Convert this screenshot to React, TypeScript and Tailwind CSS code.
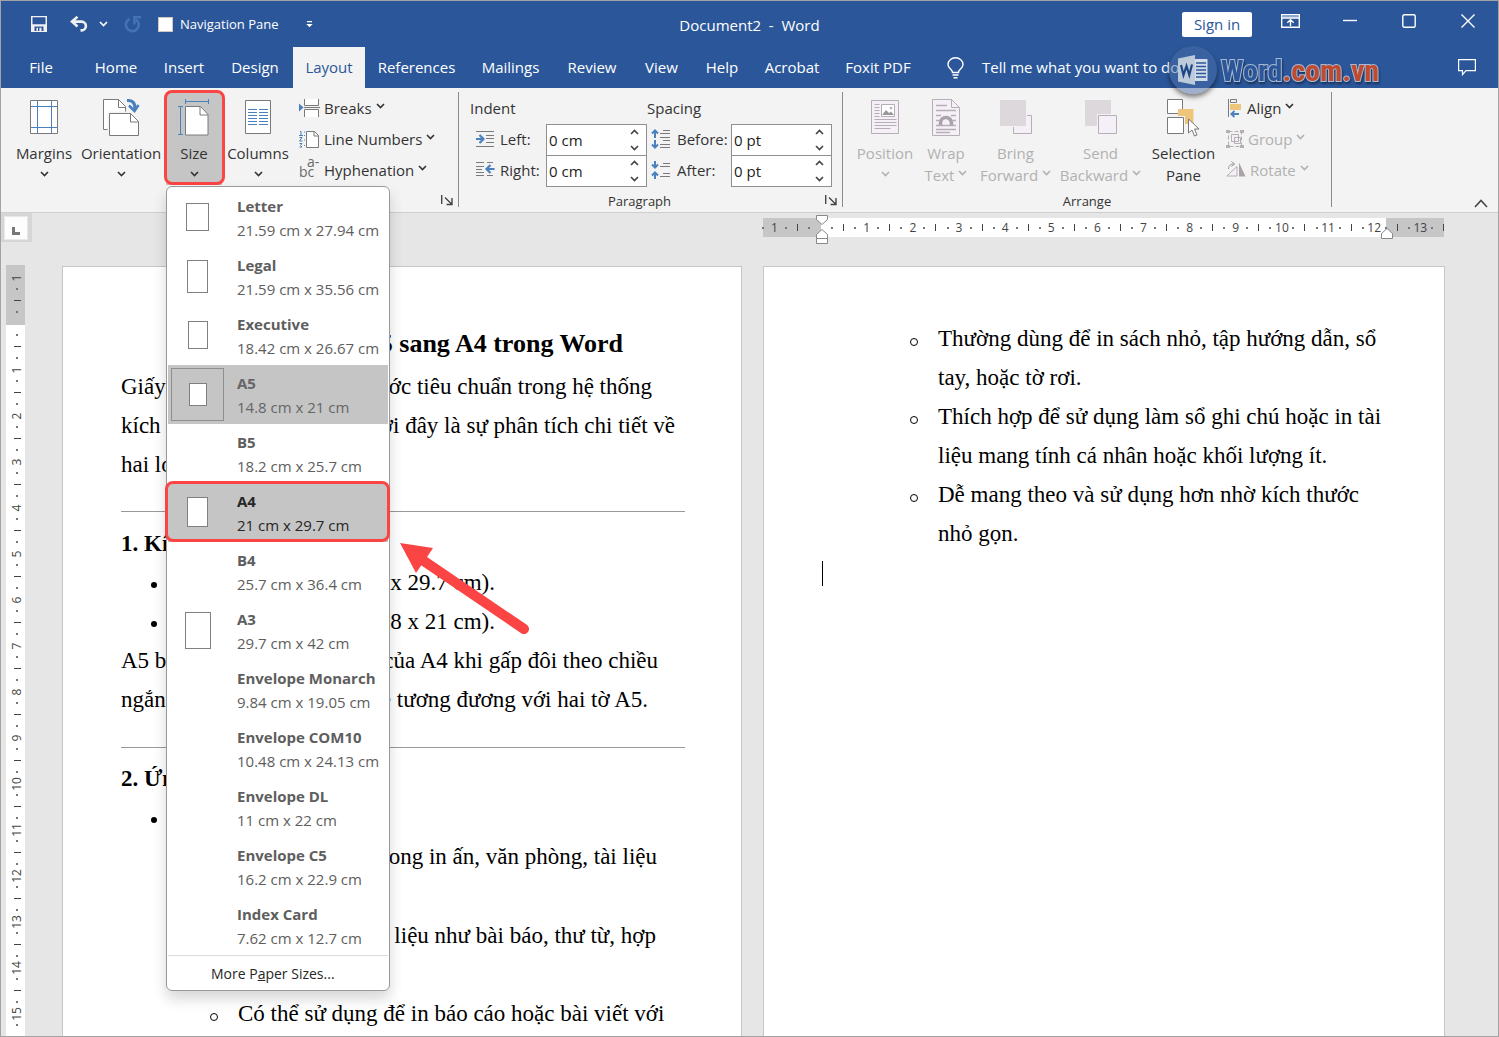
import React from 'react';

type P = { children?: React.ReactNode };

const Chevron = ({ className = '' }: { className?: string }) => (
  <svg width="9" height="6" viewBox="0 0 9 6" className={'shrink-0 ' + className} fill="none" stroke="currentColor" strokeWidth="1.6">
    <path d="M1 1l3.5 3.5L8 1" />
  </svg>
);

/* ---------- title bar ---------- */

const SaveIcon = () => (
  <svg width="16" height="16" viewBox="0 0 16 16">
    <path d="M0 0h16v16H0z" fill="#f0f0f0" />
    <path d="M1.5 1.2h13v7h-13zM3.5 10.5h9V15h-2v-3.2H8.4V15H7v-3.2H5.5V15h-2z" fill="#2b579a" />
  </svg>
);

const UndoIcon = () => (
  <svg width="18" height="16" viewBox="0 0 18 16" fill="none" stroke="#f0f0f0" strokeWidth="2.6">
    <path d="M7.5 .8L2 5.6l5.5 4.8M2.5 5.6h9a4.4 4.4 0 010 8.8h-1" />
  </svg>
);

const RedoIcon = () => (
  <svg width="18" height="17" viewBox="0 0 18 17" fill="none" stroke="#4473b3" strokeWidth="2.6">
    <path d="M5.500 3A6.400 6.400 0 1012 3.500" />
    <path d="M10.500 8.500V1.300h6.500" strokeWidth="2.400" />
  </svg>
);

function TitleBar() {
  return (
    <header className="flex h-[46px] items-center text-white">
      <div className="flex flex-1 items-center pl-[30px]">
        <button aria-label="Save"><SaveIcon /></button>
        <button aria-label="Undo" className="ml-[23px]"><UndoIcon /></button>
        <button aria-label="Undo history" className="ml-[11px]"><Chevron /></button>
        <button aria-label="Redo" className="ml-4"><RedoIcon /></button>
        <label className="ml-4 flex items-center gap-[7px] pt-px text-[13px]">
          <input type="checkbox" className="size-[15px] appearance-none border border-[#d0c8c0] bg-white" />
          Navigation Pane
        </label>
        <button aria-label="Customize Quick Access Toolbar" className="ml-[28px]">
          <svg width="7" height="7" viewBox="0 0 7 7" fill="#fff"><path d="M1 0h5v1.2H1zM.3 3h6.4L3.5 6.2z" /></svg>
        </button>
      </div>
      <h1 className="pt-[2px] text-[15px] whitespace-pre">Document2  -  Word</h1>
      <div className="flex flex-1 items-center justify-end pr-[23px] pl-[7px]">
        <button className="h-[25px] w-[70px] rounded-xs bg-white text-[15px] leading-[25px] text-[#2b579a]">Sign in</button>
        <button aria-label="Ribbon Display Options" className="mb-1.5 ml-[29px]">
          <svg width="19" height="14" viewBox="0 0 19 14" fill="none" stroke="#fff" strokeWidth="1.4">
            <path d="M.7.7h17.6v12.6H.7z" /><path d="M1 2.6h17" stroke="#8fa8cf" strokeWidth="2" /><path d="M1 4h17M9.5 12V6M6.3 8.8l3.2-3 3.2 3" />
          </svg>
        </button>
        <button aria-label="Minimize" className="mb-1.5 ml-[43px]">
          <svg width="14" height="14" viewBox="0 0 14 14" stroke="#fff" strokeWidth="1.4"><path d="M0 6.5h14" /></svg>
        </button>
        <button aria-label="Maximize" className="mb-1.5 ml-[45px]">
          <svg width="14" height="14" viewBox="0 0 14 14" fill="none" stroke="#fff" strokeWidth="1.4"><rect x=".8" y=".8" width="12.4" height="12.4" rx="1.5" /></svg>
        </button>
        <button aria-label="Close" className="mb-1.5 ml-[45px]">
          <svg width="14" height="14" viewBox="0 0 14 14" stroke="#fff" strokeWidth="1.4"><path d="M.5.5l13 13M13.5.5l-13 13" /></svg>
        </button>
      </div>
    </header>
  );
}

/* ---------- tabs ---------- */

const TABS: [string, string][] = [
  ['File', 'w-[80px]'], ['Home', 'w-[70px]'], ['Insert', 'w-[66px]'], ['Design', 'w-[76px]'],
  ['Layout', 'w-[72px]'], ['References', 'w-[103px]'], ['Mailings', 'w-[85px]'], ['Review', 'w-[78px]'],
  ['View', 'w-[61px]'], ['Help', 'w-[60px]'], ['Acrobat', 'w-[80px]'], ['Foxit PDF', 'w-[92px]'],
];

function Watermark() {
  return (
    <div className="absolute -top-[1px] left-[1168px] z-10 flex items-center" aria-label="Word.com.vn">
      <span className="flex size-[48px] items-center justify-center rounded-full bg-[#4a6ea6]/50 shadow-[0_3px_5px_rgba(0,0,0,0.5)]">
        <svg width="32" height="30" viewBox="0 0 32 30">
          <path d="M17 4h13.500v22H17z" fill="#d3dbe8" />
          <path d="M19 8h10M19 11.500h10M19 15h10M19 18.500h10M19 22h10" stroke="#2b579a" strokeWidth="1.5" />
          <path d="M1 3.500L18 0v30L1 26.500z" fill="#bccada" />
          <path d="M4 10l2.500 10L9.500 11l2.800 9L15 9.500" fill="none" stroke="#1f4687" strokeWidth="2.200" />
        </svg>
      </span>
      <span className="ml-[4px] font-['Liberation_Sans_Narrow','Roboto_Condensed','Liberation_Sans',sans-serif] text-[30px] font-bold text-[#2b579a] [paint-order:stroke_fill] [-webkit-text-stroke:2px_#a9b9d2] drop-shadow-[1px_2px_1px_rgba(0,0,0,0.4)]">
        Word<span className="text-[#c04a30]">.com.vn</span>
      </span>
    </div>
  );
}

function TabBar() {
  return (
    <nav className="relative flex h-[41px] items-stretch text-[15px] text-white">
      {TABS.map(([t, w]) => (
        <button key={t} className={w + (t === 'Layout' ? ' bg-[#f3f3f3] text-[#2b579a]' : '')}>{t}</button>
      ))}
      <button className="ml-[23px] flex items-center gap-[18px] whitespace-nowrap">
        <svg width="17" height="22" viewBox="0 0 17 22" fill="none" stroke="#fff" strokeWidth="1.4">
          <path d="M5.500 15.500c0-3-4.500-4-4.500-8a7.500 6.700 0 0115 0c0 4-4.500 5-4.500 8zM5.500 18h6M6.500 20.700h4" />
        </svg>
        Tell me what you want to do
      </button>
      <Watermark />
      <button aria-label="Comments" className="mr-[22px] ml-auto">
        <svg width="18" height="17" viewBox="0 0 18 17" fill="none" stroke="#fff" strokeWidth="1.2"><path d="M.6.600h16.800v11H8l-3.500 4v-4H.600z" /></svg>
      </button>
    </nav>
  );
}

/* ---------- ribbon icons ---------- */

const Ico = ({ w, h, children }: P & { w: number; h: number }) => (
  <svg width={w} height={h} viewBox={`0 0 ${w} ${h}`} fill="none" strokeWidth="1" className="shrink-0">{children}</svg>
);
const G = '#7a7a7a';
const B = '#4a80bd';
const D = '#b5aeb5';

const MarginsIcon = () => (
  <Ico w={28} h={36}>
    <path d="M.5 1.500h27v33H.500z" fill="#fff" stroke={G} />
    <path d="M7.500 2v32M21.500 2v32M1 7.500h26M1 28.500h26" stroke={B} />
  </Ico>
);
const OrientationIcon = () => (
  <Ico w={38} h={40}>
    <path d="M1.500.500h15l7 7v23h-22z" fill="#fff" stroke={G} /><path d="M16.500.500v8h7" stroke={G} />
    <path d="M7.500 14.500h22l8 8v15h-30z" fill="#fff" stroke="#f3f3f3" strokeWidth="4" />
    <path d="M7.500 14.500h21l8 8v14h-29z" fill="#fff" stroke={G} /><path d="M28.500 14.500V23h8" stroke={G} />
    <path d="M25 1.500c6 0 8 2 8 9" stroke={B} strokeWidth="3.200" /><path d="M27 6.500l5.500 5.500L36.500 6" stroke={B} strokeWidth="2.600" />
  </Ico>
);
const SizeIcon = () => (
  <Ico w={32} h={38}>
    <path d="M7.500 7.500h15l7.500 8v20.500H7.500z" fill="#fff" stroke={G} /><path d="M22 7.500v8.500h8" stroke={G} />
    <path d="M7.500 0v5M30.500 0v5M7.500 2.500h23M0 7.500h5M0 35.500h5M2.500 8v27.500" stroke={B} />
  </Ico>
);
const ColumnsIcon = () => (
  <Ico w={26} h={36}>
    <path d="M.5 1.500h25v33H.500z" fill="#fff" stroke={G} />
    <path d="M3 10.500h9M14 10.500h9M3 13.500h9M14 13.500h9M3 16.500h9M14 16.500h9M3 19.500h9M14 19.500h9M3 22.500h9M14 22.500h9M3 25.500h9M14 25.500h9" stroke={B} />
  </Ico>
);
const BreaksIcon = () => (
  <Ico w={21} h={20}>
    <path d="M5.500 1v6.500h14V1M5.500 19v-7.500h14V19" fill="#fff" stroke={G} /><path d="M5 9.500h16" stroke={G} />
    <path d="M0 5.500v8L4.500 9.500z" fill={B} />
  </Ico>
);
const LineNumbersIcon = () => (
  <Ico w={21} h={20}>
    <path d="M7.500 2.500h8l4 4v12h-12z" fill="#fff" stroke={G} /><path d="M15 2.500V7h4.500" stroke={G} />
    <path d="M1 2.500h1v4M0 6.500h4M.5 8.500h2.500l-2.500 3.500h3M.5 14.500h2.500l-1.500 2 1.500 1.500H.500M5 3h1M5 6.500h1M5 11h1M5 16.500h1" stroke={B} />
  </Ico>
);
const HyphenationIcon = () => (
  <span className="mb-[6px] grid w-[21px] shrink-0 text-left text-[14px] leading-[10px] text-[#6a6a6a]" aria-hidden="true">
    <span className="pl-[8px]">a-</span><span>bc</span>
  </span>
);
const IndentIcon = ({ right = false }: { right?: boolean }) => (
  <Ico w={20} h={18}>
    {right
      ? <><path d="M1 1.500h8M12 1.500h6M1 5.500h8M1 8.500h6M1 11.500h8M1 14.500h8M12 14.500h6" stroke={G} /><path d="M11.500 8h8M15.500 4L11.500 8l4 4" stroke={B} strokeWidth="2.200" /></>
      : <><path d="M1 1.500h18M11 5.500h8M11 8.500h8M11 12.500h8M1 16.500h18" stroke={G} /><path d="M1 9h7M4.500 5l4 4-4 4" stroke={B} strokeWidth="2.200" /></>}
  </Ico>
);
const SpacingIcon = ({ after = false }: { after?: boolean }) => (
  <Ico w={20} h={20}>
    {after
      ? <><path d="M12 3.500h7M9 6.500h10M12 13.500h7M9 16.500h10" stroke={G} /><path d="M4 1v6M1 4.500l3 3 3-3M4 19v-6M1 15.500l3-3 3 3" stroke={B} strokeWidth="2" /></>
      : <><path d="M12 1.500h7M9 4.500h10M9 8.500h10M12 11.500h7M9 15.500h10M9 18.500h10" stroke={G} /><path d="M4 9V2M1 4.500l3-3 3 3M4 11v7M1 15.500l3 3 3-3" stroke={B} strokeWidth="2" /></>}
  </Ico>
);
const PositionIcon = () => (
  <Ico w={30} h={36}>
    <path d="M1.500 1.500h27v33h-27z" fill="#f5f0f7" stroke={D} />
    <path d="M4.500 5.500h5M4.500 8.500h5M4.500 11.500h5M4.500 14.500h5M4.500 17.500h5M4.500 20.500h22M4.500 23.500h22M4.500 26.500h22M4.500 29.500h16" stroke={D} />
    <path d="M11.500 5.500h13v12h-13z" fill="#fff" stroke={D} /><path d="M12 16l4-5 3 3 2-1.500 3 3.500z" fill="#999" /><circle cx="21" cy="9" r="1.300" fill={D} />
  </Ico>
);
const WrapIcon = () => (
  <Ico w={28} h={38}>
    <path d="M.5.500h19l8 8v28H.500z" fill="#f5f0f7" stroke={D} /><path d="M19.500.500v8h8" stroke={D} />
    <path d="M4 6.500h11M4 11.500h20M4 16.500h5M19 16.500h5M4 21.500h3M21 21.500h3M4 26.500h20M4 30.500h20M4 33.500h14" stroke={D} strokeWidth="1.300" />
    <path d="M8.500 26v-2a5.500 5.500 0 0111 0v2" stroke="#aaa4aa" strokeWidth="3.600" />
  </Ico>
);
const ForwardIcon = () => (
  <Ico w={34} h={36}><path d="M14.500 16.500h18v18h-18z" fill="#f5f0f7" stroke={D} /><path d="M0 0h28v28H0z" fill="#f3f3f3" /><path d="M1 1h26v26H1z" fill="#ddd8dc" /></Ico>
);
const BackwardIcon = () => (
  <Ico w={34} h={36}><path d="M1 1h26v26H1z" fill="#ddd8dc" /><path d="M13 15h21v21H13z" fill="#f3f3f3" /><path d="M14.500 16.500h18v18h-18z" fill="#f5f0f7" stroke={D} /></Ico>
);
const SelectionIcon = () => (
  <Ico w={36} h={38}>
    <path d="M1.500.500h15v14h-15z" fill="#fff" stroke={G} /><path d="M12 10h15.500v15H12z" fill="#eec67b" />
    <path d="M1.500 18.500h16v16h-16z" fill="#fff" stroke="#f3f3f3" strokeWidth="3" />
    <path d="M1.500 18.500h16v16h-16z" fill="#fff" stroke={G} />
    <path d="M22.500 20v14l3.500-3 2.500 6 2.500-1-2.500-6h4.500z" fill="#fff" stroke="#777" />
  </Ico>
);
const AlignIcon = () => (
  <Ico w={17} h={20}>
    <path d="M2.500 1v18" stroke={G} /><path d="M4.500 1.500h6v3h-6z" stroke={G} /><path d="M4 6h11v6H4z" fill="#eec67b" />
    <path d="M5 16h8M8.500 13L5.300 16l3.200 3" stroke={B} strokeWidth="1.800" />
  </Ico>
);
const GroupIcon = () => (
  <Ico w={18} h={20}>
    <path d="M2.500 2.500h13v15h-13z" stroke={D} strokeDasharray="4 2" /><path d="M5.500 5.500h7v7h-7zM8.500 8.500h6v6h-6z" fill="#f5f0f7" fillOpacity=".5" stroke={D} />
    <path d="M0 1h4v3H0zM14 1h4v3h-4zM0 16h4v3H0zM14 16h4v3h-4z" fill={D} />
  </Ico>
);
const RotateIcon = () => (
  <Ico w={20} h={18}>
    <path d="M11 5.500v9.500H.800z" fill="#f5f0f7" stroke={D} /><path d="M13 1.500V15.500h6.500z" fill="#aaa4aa" /><path d="M2.500 8c0-3.500 2-5 6-5M5.500.500l3 2.500-3 2.500" stroke="#999" />
  </Ico>
);

/* ---------- ribbon parts ---------- */

function BigButton({ icon, lines, width, disabled, arrow = true }: { icon: React.ReactNode; lines: string[]; width: string; disabled?: boolean; arrow?: boolean }) {
  return (
    <button disabled={disabled} className={'flex h-[93px] flex-col items-center whitespace-nowrap leading-[22px] ' + width + (disabled ? ' text-[#b1b1b1]' : '')}>
      <span className="flex h-[50px] items-start pt-[7px]">{icon}</span>
      <span>{lines[0]}</span>
      <span className="flex h-[21px] items-center gap-[4px]">{lines[1]}{arrow && <Chevron className={lines[1] ? 'mb-[3px]' : 'mb-[2px]'} />}</span>
    </button>
  );
}

function SmallButton({ icon, label, disabled }: { icon: React.ReactNode; label: string; disabled?: boolean }) {
  return (
    <button disabled={disabled} className={'flex h-[31px] items-center gap-[4px] whitespace-nowrap' + (disabled ? ' text-[#b1b1b1]' : '')}>
      {icon}<span className="pt-px">{label}</span><Chevron className="mb-[3px]" />
    </button>
  );
}

const Launcher = ({ label }: { label: string }) => (
  <button aria-label={label} className="absolute right-[5px] bottom-px">
    <svg width="12" height="11" viewBox="0 0 12 11" fill="none" stroke="#444" strokeWidth="1.400"><path d="M.7 0v9M4 2.500l6.500 6.500M11 3v6.500H5.500" /></svg>
  </button>
);

function Group({ title, label, className, footer = '', children }: P & { title: string; label?: string; className: string; footer?: string }) {
  return (
    <section aria-label={title} className={'relative flex h-[115px] flex-col border-r border-[#8a8a8a] ' + className}>
      <div className="flex h-[99px]">{children}</div>
      <div className={'text-center text-[13px] leading-[32px] ' + footer}>{label}</div>
    </section>
  );
}

function Field({ id, icon, label, value, iconBox, labelBox }: { id: string; icon: React.ReactNode; label: string; value: string; iconBox: string; labelBox: string }) {
  return (
    <div className="flex h-[31px] items-center">
      <span className={iconBox}>{icon}</span>
      <label htmlFor={id} className={labelBox}>{label}</label>
      <div className="mt-[2px] flex h-[32px] w-[101px] border border-[#8f8f8f] bg-white">
        <input id={id} defaultValue={value} className="w-[76px] min-w-0 bg-transparent px-[2px] pt-[2px] text-[#222] outline-none" />
        <span className="flex flex-1 flex-col items-center justify-between py-[4px] text-[#444]">
          <button aria-label={label + ' increase'} className="flex"><Chevron className="rotate-180" /></button>
          <button aria-label={label + ' decrease'} className="flex"><Chevron /></button>
        </span>
      </div>
    </div>
  );
}

/* ---------- size menu ---------- */

const SIZES: { name: string; dim: string; icon?: string }[] = [
  { name: 'Letter', dim: '21.59 cm x 27.94 cm', icon: 'w-[23px] h-[28px]' },
  { name: 'Legal', dim: '21.59 cm x 35.56 cm', icon: 'w-[21px] h-[33px]' },
  { name: 'Executive', dim: '18.42 cm x 26.67 cm', icon: 'w-[20px] h-[28px]' },
  { name: 'A5', dim: '14.8 cm x 21 cm', icon: 'w-[18px] h-[23px]' },
  { name: 'B5', dim: '18.2 cm x 25.7 cm' },
  { name: 'A4', dim: '21 cm x 29.7 cm', icon: 'w-[21px] h-[30px]' },
  { name: 'B4', dim: '25.7 cm x 36.4 cm' },
  { name: 'A3', dim: '29.7 cm x 42 cm', icon: 'w-[26px] h-[37px]' },
  { name: 'Envelope Monarch', dim: '9.84 cm x 19.05 cm' },
  { name: 'Envelope COM10', dim: '10.48 cm x 24.13 cm' },
  { name: 'Envelope DL', dim: '11 cm x 22 cm' },
  { name: 'Envelope C5', dim: '16.2 cm x 22.9 cm' },
  { name: 'Index Card', dim: '7.62 cm x 12.7 cm' },
];

function SizeMenu() {
  return (
    <div className="absolute top-full left-0 z-30 mt-px w-[224px] rounded-md border border-[#999] bg-white p-px text-[15px] shadow-[0_8px_14px_rgba(0,0,0,0.16)]">
      <ul>
        {SIZES.map((s) => (
          <li key={s.name} className="relative">
            <button className={'flex h-[59px] w-full items-center text-left leading-[24px] whitespace-nowrap ' + (s.name === 'A4' ? 'bg-[#c5c5c5] text-[#262626]' : s.name === 'A5' ? 'bg-[#c5c5c5] text-[#666]' : 'text-[#5e5e5e]')}>
              <span className={'mb-px ml-[3px] flex size-[53px] shrink-0 items-center justify-center border ' + (s.name === 'A5' ? 'border-[#8f8f8f]' : 'border-transparent')}>
                {s.icon && <span className={'border border-[#808080] bg-white ' + s.icon} />}
              </span>
              <span className="ml-[13px]">
                <span className="block font-bold">{s.name}</span>
                <span className="block">{s.dim}</span>
              </span>
            </button>
            {s.name === 'A4' && <span className="pointer-events-none absolute -top-[2px] right-[-2px] bottom-0 left-[-3px] rounded-lg border-[3px] border-[#fb4444]" />}
          </li>
        ))}
      </ul>
      <button className="block h-[34px] w-full border-t border-[#dcdcdc] pt-px pl-[43px] text-left text-[14px] text-[#262626]">
        More P<u>a</u>per Sizes...
      </button>
    </div>
  );
}

function Ribbon() {
  return (
    <div className="relative z-20 flex h-[125px] border-b border-[#cfcfcf] bg-[#f3f3f3] pt-[4px] text-[15px] text-[#333]">
      <Group title="Page Setup" className="w-[458px] pl-[11px]">
        <BigButton icon={<MarginsIcon />} lines={['Margins']} width="w-[64px]" />
        <BigButton icon={<OrientationIcon />} lines={['Orientation']} width="w-[90px]" />
        <div className="relative h-[93px] bg-[#c5c5c5]">
          <BigButton icon={<SizeIcon />} lines={['Size']} width="w-[56px]" />
          <span className="pointer-events-none absolute -top-[2px] right-[-3px] bottom-0 left-[-2px] rounded-lg border-[3px] border-[#fb4444]" />
          <SizeMenu />
        </div>
        <BigButton icon={<ColumnsIcon />} lines={['Columns']} width="w-[72px]" />
        <div className="ml-[5px]">
          <SmallButton icon={<BreaksIcon />} label="Breaks" />
          <SmallButton icon={<LineNumbersIcon />} label="Line Numbers" />
          <SmallButton icon={<HyphenationIcon />} label="Hyphenation" />
        </div>
        <Launcher label="Page Setup dialog" />
      </Group>
      <Group title="Paragraph" label="Paragraph" className="w-[384px]" footer="pr-[22px]">
        <div className="flex">
          <div className="pl-[11px]">
            <div className="h-[31px] leading-[33px]">Indent</div>
            <Field id="il" icon={<IndentIcon />} label="Left:" value="0 cm" iconBox="ml-[5px] w-[25px]" labelBox="w-[46px] pt-px" />
            <Field id="ir" icon={<IndentIcon right />} label="Right:" value="0 cm" iconBox="ml-[5px] w-[25px]" labelBox="w-[46px] pt-px" />
          </div>
          <div>
            <div className="h-[31px] leading-[33px]">Spacing</div>
            <Field id="sb" icon={<SpacingIcon />} label="Before:" value="0 pt" iconBox="ml-[4px] w-[26px]" labelBox="w-[54px] pt-px" />
            <Field id="sa" icon={<SpacingIcon after />} label="After:" value="0 pt" iconBox="ml-[4px] w-[26px]" labelBox="w-[54px] pt-px" />
          </div>
        </div>
        <Launcher label="Paragraph dialog" />
      </Group>
      <Group title="Arrange" label="Arrange" className="w-[489px] pl-[12px]" footer="pr-[12px]">
        <BigButton disabled icon={<PositionIcon />} lines={['Position']} width="w-[60px]" />
        <BigButton disabled icon={<WrapIcon />} lines={['Wrap', 'Text']} width="w-[62px]" />
        <BigButton disabled icon={<ForwardIcon />} lines={['Bring', 'Forward']} width="w-[77px]" />
        <BigButton disabled icon={<BackwardIcon />} lines={['Send', 'Backward']} width="w-[93px]" />
        <BigButton icon={<SelectionIcon />} lines={['Selection', 'Pane']} width="w-[73px]" arrow={false} />
        <div className="ml-[6px]">
          <SmallButton icon={<AlignIcon />} label="Align" />
          <SmallButton disabled icon={<GroupIcon />} label="Group" />
          <SmallButton disabled icon={<RotateIcon />} label="Rotate" />
        </div>
      </Group>
      <button aria-label="Collapse the Ribbon" className="mr-[10px] mb-[4px] ml-auto flex self-end">
        <svg width="14" height="9" viewBox="0 0 14 9" fill="none" stroke="#444" strokeWidth="1.600"><path d="M1 8l6-6.500L13 8" /></svg>
      </button>
    </div>
  );
}

/* ---------- rulers ---------- */

function HRuler() {
  const marks = Array.from({ length: 60 }, (_, i) => i - 1);
  return (
    <div className="relative flex h-[19px] items-center justify-between bg-white text-[12px] text-[#444]" aria-hidden="true">
      <span className="absolute inset-y-0 left-0 w-[58px] bg-[#c6c6c6]" />
      <span className="absolute inset-y-0 right-0 w-[58px] bg-[#c6c6c6]" />
      {marks.map((i) => {
        const r = ((i % 4) + 4) % 4;
        const n = Math.abs(i / 4 - 1);
        return (
          <span key={i} className="relative flex w-0 justify-center">
            {r === 0 ? (n ? n : '') : r === 2 ? <i className="h-[7px] w-px shrink-0 bg-[#444]" /> : <i className="size-[2px] shrink-0 bg-[#777]" />}
          </span>
        );
      })}
      <svg className="absolute -top-[3px] left-[53px]" width="12" height="30" viewBox="0 0 12 30" fill="#fff" stroke="#888">
        <path d="M.5.500h11v4L6 9.500.500 4.500zM.500 19.500L6 14.500l5.500 5v4H.500zM.500 23.500h11v5H.500z" />
      </svg>
      <svg className="absolute top-[10px] right-[51px]" width="12" height="12" viewBox="0 0 12 12" fill="#fff" stroke="#888">
        <path d="M.500 5.500L6 .500l5.500 5v5H.500z" />
      </svg>
    </div>
  );
}

function VRuler() {
  const cells = Array.from({ length: 17 }, (_, i) => Math.abs(i - 1));
  return (
    <div className="relative h-full w-[19px] overflow-hidden bg-white pt-[7px] text-[12px] text-[#444]" aria-hidden="true">
      <span className="absolute inset-x-0 top-0 h-[60px] bg-[#c6c6c6]" />
      {cells.map((n, i) => (
        <div key={i} className="relative grid h-[46px] grid-rows-4 place-items-center pl-[3px]">
          <span className="flex h-0 -rotate-90 items-center">{n || ''}</span>
          <i className="size-[2px] bg-[#777]" />
          <i className="h-px w-[7px] bg-[#444]" />
          <i className="size-[2px] bg-[#777]" />
        </div>
      ))}
    </div>
  );
}

/* ---------- document ---------- */

const Row = ({ l, r, pr = '', pl = '' }: { l?: React.ReactNode; r?: string; pr?: string; pl?: string }) => (
  <div className={'flex h-[39px] justify-between whitespace-nowrap ' + pr + ' ' + pl}>
    <span>{l}</span><span>{r}</span>
  </div>
);

const Dot = () => <i className="inline-block size-[6px] rounded-full bg-black align-middle" />;
const Ring = () => <i className="mt-[19px] inline-block size-[8px] shrink-0 rounded-full border border-black" />;

function PageOne() {
  return (
    <article className="flex-1 overflow-hidden border border-b-0 border-[#c6c6c6] bg-white pt-[54px] pr-[56px] pl-[58px]">
      <h2 className="h-[46px] pr-[62px] text-right text-[26px] leading-[45px] font-bold whitespace-nowrap">A5 sang A4 trong Word</h2>
      <Row l="Giấy" r="thước tiêu chuẩn trong hệ thống" pr="pr-[33px]" />
      <Row l="kích" r="Dưới đây là sự phân tích chi tiết về" pr="pr-[10px]" />
      <Row l="hai loại" />
      <hr className="mt-[27px] mb-[12px] border-[#999]" />
      <h3 className="h-[39px] font-bold">1. Kích</h3>
      <Row l={<Dot />} r="(21 x 29.7 cm)." pr="pr-[190px]" pl="pl-[30px]" />
      <Row l={<Dot />} r="(14.8 x 21 cm)." pr="pr-[190px]" pl="pl-[30px]" />
      <Row l="A5 bằng" r="của A4 khi gấp đôi theo chiều" pr="pr-[27px]" />
      <Row l="ngắn" r="sẽ tương đương với hai tờ A5." pr="pr-[37px]" />
      <hr className="mt-[28px] mb-[11px] border-[#999]" />
      <h3 className="h-[39px] font-bold">2. Ứng</h3>
      <Row l={<Dot />} pl="pl-[30px]" />
      <Row r="trong in ấn, văn phòng, tài liệu" pr="pr-[28px]" />
      <div className="h-[40px]" />
      <Row r="tài liệu như bài báo, thư từ, hợp" pr="pr-[29px]" />
      <div className="h-[39px]" />
      <div className="flex gap-[20px] pl-[89px] whitespace-nowrap"><Ring /><span>Có thể sử dụng để in báo cáo hoặc bài viết với</span></div>
    </article>
  );
}

const USES = [
  ['Thường dùng để in sách nhỏ, tập hướng dẫn, sổ', 'tay, hoặc tờ rơi.'],
  ['Thích hợp để sử dụng làm sổ ghi chú hoặc in tài', 'liệu mang tính cá nhân hoặc khối lượng ít.'],
  ['Dễ mang theo và sử dụng hơn nhờ kích thước', 'nhỏ gọn.'],
];

function PageTwo() {
  return (
    <article className="flex-1 overflow-hidden border border-b-0 border-[#c6c6c6] bg-white px-[58px] pt-[52px]">
      <ul className="pl-[88px]">
        {USES.map(([a, b]) => (
          <li key={a} className="flex gap-[20px] whitespace-nowrap"><Ring /><span>{a}<br />{b}</span></li>
        ))}
      </ul>
      <div className="mt-[8px] h-[25px] w-px bg-black" />
    </article>
  );
}

export default function App() {
  return (
    <div className="relative flex h-screen flex-col overflow-hidden border border-[#a3a3a3] bg-[#e6e6e6] font-['Open_Sans','Noto_Sans',sans-serif]">
      <div className="relative z-30 bg-[#2b579a]">
        <TitleBar />
        <TabBar />
      </div>
      <Ribbon />
      <div className="flex h-[52px] shrink-0">
        <div className="h-[29px] w-[31px] bg-[#d6d6d6] pt-[3px] pl-[3px]">
          <div className="flex size-[24px] items-end justify-center border border-[#e8e8e8] bg-[#fdfdfd] pb-[4px]">
            <i className="size-[8px] border-b-[3px] border-l-[3px] border-[#777]" />
          </div>
        </div>
        <div className="flex flex-1 gap-[21px] pt-[5px] pr-[54px] pl-[29px]">
          <div className="flex-1" />
          <div className="flex-1"><HRuler /></div>
        </div>
      </div>
      <div className="flex min-h-0 flex-1 pl-[5px]">
        <VRuler />
        <main className="relative flex flex-1 gap-[21px] pt-px pr-[53px] pl-[37px] font-['Liberation_Serif',serif] text-[23px] leading-[39px] text-black">
          <PageOne />
          <PageTwo />
          <svg className="absolute top-[278px] left-[375px] z-10" width="130" height="93" viewBox="0 0 130 93" aria-hidden="true">
            <path d="M0 0l33 5-6 9 -11 16z" fill="#fb4444" />
            <path d="M18 14L124 86" stroke="#fb4444" strokeWidth="10" strokeLinecap="round" />
          </svg>
        </main>
      </div>
    </div>
  );
}
